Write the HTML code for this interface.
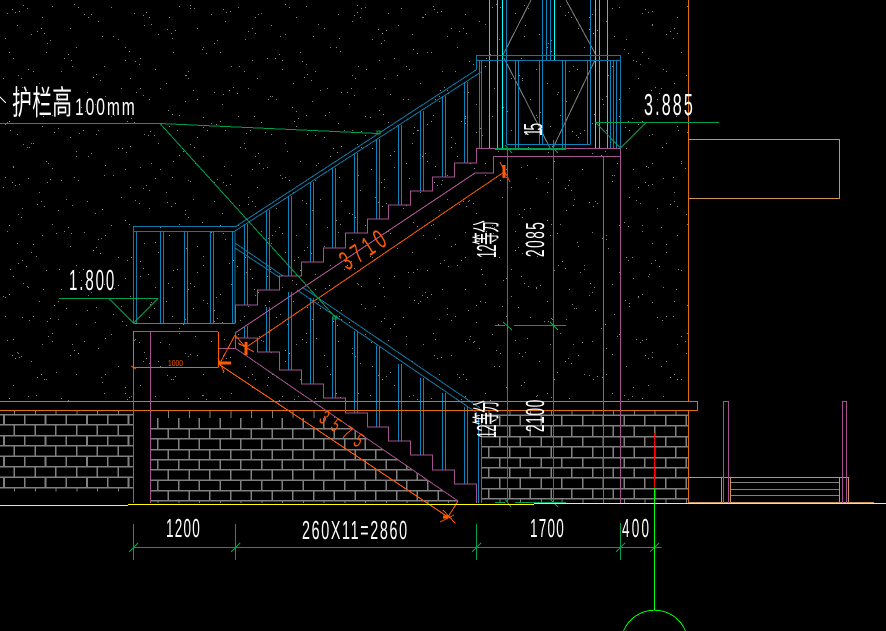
<!DOCTYPE html>
<html>
<head>
<meta charset="utf-8">
<style>
html,body{margin:0;padding:0;background:#000;width:886px;height:631px;overflow:hidden}
svg{display:block}
text{font-family:"Liberation Sans","Noto Sans CJK SC",sans-serif;fill:#fff}
.o{fill:#ff5a00}
</style>
</head>
<body>
<svg width="886" height="631" viewBox="0 0 886 631" xmlns="http://www.w3.org/2000/svg">
<defs>
<pattern id="dotsA" patternUnits="userSpaceOnUse" width="127" height="109">
<path shape-rendering="crispEdges" fill="none" stroke="#808080" stroke-width="1" d="M7 13.5h1M52 6.5h1M98 21.5h1M31 34.5h1M76 47.5h1M118 39.5h1M13 58.5h1M61 71.5h1M104 66.5h1M39 83.5h1M87 92.5h1M22 99.5h1M121 88.5h1M70 28.5h1M3 78.5h1M46 52.5h1M111 7.5h1M84 14.5h1M28 69.5h1M95 104.5h1M58 101.5h1M17 25.5h1M66 90.5h1M125 60.5h1M42 17.5h1"/>
</pattern>
<pattern id="dotsB" patternUnits="userSpaceOnUse" width="211" height="173">
<path shape-rendering="crispEdges" fill="none" stroke="#8a8a8a" stroke-width="1" d="M12 9.5h1M15 12.5h1M19 11.5h1M74 4.5h1M78 7.5h1M143 15.5h1M146 12.5h1M149 17.5h1M190 8.5h1M37 31.5h1M41 28.5h1M44 33.5h1M102 36.5h1M167 29.5h1M171 33.5h1M175 30.5h1M9 52.5h1M64 58.5h1M68 54.5h1M71 60.5h1M125 47.5h1M129 51.5h1M202 49.5h1M206 53.5h1M33 71.5h1M93 77.5h1M96 74.5h1M100 80.5h1M155 69.5h1M186 75.5h1M18 90.5h1M22 87.5h1M26 93.5h1M59 96.5h1M136 92.5h1M140 88.5h1M143 95.5h1M197 99.5h1M81 107.5h1M85 111.5h1M43 116.5h1M114 115.5h1M118 112.5h1M168 110.5h1M172 114.5h1M5 124.5h1M9 121.5h1M54 132.5h1M58 128.5h1M96 134.5h1M150 131.5h1M154 135.5h1M203 127.5h1M207 130.5h1M29 147.5h1M33 143.5h1M76 151.5h1M122 148.5h1M126 152.5h1M130 146.5h1M179 155.5h1M183 151.5h1M13 166.5h1M48 163.5h1M52 168.5h1M105 165.5h1M160 169.5h1M195 163.5h1"/>
</pattern>
<pattern id="dotsC" patternUnits="userSpaceOnUse" width="167" height="139">
<path shape-rendering="crispEdges" fill="none" stroke="#808080" stroke-width="1" d="M23 5.5h1M27 8.5h1M88 17.5h1M91 14.5h1M151 24.5h1M5 38.5h1M47 43.5h1M50 40.5h1M113 36.5h1M72 66.5h1M135 61.5h1M139 64.5h1M18 75.5h1M21 78.5h1M160 88.5h1M56 94.5h1M101 99.5h1M105 96.5h1M36 117.5h1M127 121.5h1M131 118.5h1M10 130.5h1M79 133.5h1M83 130.5h1M148 135.5h1"/>
</pattern>
<clipPath id="cm"><path d="M150.5 410V503H458.5V501L326 410Z"/></clipPath>
<clipPath id="cr"><path d="M481.5 410V503H688V410Z"/></clipPath>
</defs>

<rect width="886" height="631" fill="#000"/>
<path d="M0 0H688V401H0Z" fill="url(#dotsA)"/>
<path d="M0 0H688V401H0Z" fill="url(#dotsB)"/>
<path d="M0 0H688V401H0Z" fill="url(#dotsC)"/>

<g fill="none" shape-rendering="crispEdges">
<!-- bricks -->
<g stroke="#808080">
<path stroke-width="1.5" d="M0 414.5H133M0 424.5H133M0 435.5H133M0 445.5H133M0 456H133M0 466.5H133M0 477H133M0 487.5H133"/>
<g stroke-width="10.4" stroke-dasharray="1.6 19.15">
<path d="M3.2 419.5H133M13.5 430H133M3.2 440.5H133M13.5 450.5H133M3.2 461H133M13.5 471.5H133M3.2 482H133"/>
</g>
<path stroke-width="4" stroke-dasharray="1 19.75" d="M14 412.5H133M14 489.5H133"/>
<g clip-path="url(#cm)">
<path stroke-width="1.5" d="M150 428.5H460M150 438.5H460M150 449.5H460M150 459.5H460M150 469.5H460M150 480H460M150 490.5H460M150 500.5H460"/>
<path stroke-width="7.5" stroke-dasharray="1 19.75" d="M168 414H340"/>
<g stroke-width="10.4" stroke-dasharray="1.6 19.15">
<path d="M157 423.3H340M167.5 433.5H380M157 444H400M167.5 454.3H420M157 464.5H440M167.5 474.8H460M157 485.1H460M167.5 495.5H460"/>
</g>
<path stroke-width="2.5" stroke-dasharray="1 19.75" d="M157.5 502H460"/>
</g>
<g clip-path="url(#cr)">
<path stroke-width="1.5" d="M481 415H690M481 425.5H690M481 436.5H690M481 446.5H690M481 457.5H690M481 467.5H690M481 477.5H690M481 488.5H690M481 498.5H690"/>
<path stroke-width="4.5" stroke-dasharray="1 19.75" d="M488.5 412.8H690"/>
<g stroke-width="10.4" stroke-dasharray="1.6 19.15">
<path d="M478 420.3H690M488 431H690M478 441.5H690M488 452H690M478 462.5H690M488 472.7H690M478 483H690M488 493.5H690"/>
</g>
<path stroke-width="4.5" stroke-dasharray="1 19.75" d="M478.5 501H690"/>
</g>
</g>

<!-- tower upper lines -->
<g stroke="#c8935f"><path d="M489.5 0V148M497.5 0V148M599.5 0V148M607.5 0V148"/></g>
<g stroke="#808080"><path d="M531 0L503 55M566 0L596 55M504 58L550 148M596 58L553 148"/></g>
<g stroke="#00ffff"><path d="M502.5 0V148M595.5 0V148M554.5 0V60"/></g>
<g stroke="#0a84bf"><path d="M506.5 0V144M542.5 0V144M546.5 0V60M550.5 0V60M590.5 0V144"/></g>

<!-- right landing rail -->
<g stroke="#1078a4">
<path d="M476.5 70V55.5H620.5V148M476.5 60.5H620.5"/>
</g>
<g stroke="#0a84bf">
<path d="M479.5 60V148M481.5 60V148M515.5 60V148M518.5 60V148M539.5 60V144M542.5 60V144M562.5 60V148M565.5 60V148M587.5 60V144M590.5 60V144M610.5 60V148M613.5 60V148M616.5 60V148M506.5 144.5H590.5"/>
</g>

<!-- upper handrail -->
<g stroke="#1078a4">
<path d="M235 227L476 70M235 231L481 72M235 226.5H133.5V323M133.5 231.5H235V323M136.5 231V323"/>
</g>
<g stroke="#0a84bf">
<path d="M160.5 231V323M163.5 231V323M184.5 231V323M187.5 231V323M210.5 231V323M213.5 231V323M232.5 231V323"/>
<path d="M244.5 224V305M247.5 224V305M266.5 210V290M269.5 210V290M288.5 196V276M291.5 196V276M310.5 182V262M313.5 182V262M332.5 168V248M335.5 168V248M354.5 153V233M357.5 153V233M376.5 139V219M379.5 139V219M398.5 125V205M401.5 125V205M420.5 111V191M423.5 111V191M442.5 96V177M445.5 96V177M464.5 82V163M467.5 82V163"/>
<!-- lower balusters -->
<path d="M244.5 326V338M247.5 326V338M266.5 307V352M269.5 307V352M288.5 292V370M291.5 292V370M310.5 298V384M313.5 298V384M332.5 317V398M335.5 317V398M354.5 331V413M357.5 331V413M376.5 346V427M379.5 346V427M398.5 364V441M401.5 364V441M420.5 378V455M423.5 378V455M442.5 393V470M445.5 393V470M464.5 407V484M467.5 407V484M478.5 417V503M481.5 417V503"/>
</g>
<g stroke="#1078a4">
<path d="M235 243L283 276M302 287L480 408M235 248L279 277M297 290L477 413"/>
</g>

<!-- orange lines -->
<g stroke="#e06c10">
<path d="M0 401.5H697.5V410.5H0M688.5 0V401M688.5 410V503"/>
</g>
<g stroke="#cc9058">
<path d="M688.5 139.5H839.5V198.5H688.5M688.5 477.5H848.5V503M721.5 477V503M730.5 477V503M839.5 477V503M688 502.5H874"/>
</g>
<g stroke="#808080"><path d="M731 482.5H839M731 489.5H839M731 495.5H839"/></g>

<!-- magenta -->
<g stroke="#a5508f">
<path d="M235.5 323V305H257.5V290H279.5V276H301.5V262H323.5V248H345.5V233H367.5V219H388.5V205H410.5V191H432.5V177H454.5V163H476.5V148.5H620.5V503"/>
<path d="M235.5 333V338H257.5V352H279.5V370H301.5V384H323.5V398H345.5V413H367.5V427H388.5V441H410.5V455H432.5V470H454.5V484H476.5V503"/>
<path d="M235 333L475 173H493.5V156.5H620.5M603.5 156.5V503"/>
<path d="M235 348L458 501M235.5 323.5H133.5M133.5 367V503M150.5 331.5V503M133.5 331.5H218M218.5 348.5H235.5V333"/>
<path d="M723.5 503V401.5H728.5V403M728.5 403V503M842.5 503V401.5H846.5V503"/>
</g>

<!-- dimension orange -->
<g stroke="#ff5a00">
<path d="M133.5 331V367M133.5 367.5H218.5M218.5 332V367M245 348L504 172M220 365L448 517M218 367L235 335M235 335L246 348M458 501L448 517"/>
<path d="M500 162L510 182M443 510L455 523M440 522L454 515M238 343L254 352M218 358L224 372M131 366L136 369"/>
</g>
<g stroke="#ff5a00" stroke-width="3">
<path d="M246 342V355M504 165V178M219 363H231M448 517H443"/>
</g>

<!-- green lines -->
<g stroke="#00a050">
<path d="M0 123.5H160L378 133.5M160 123.5L336 318M59 298.5H158M109 298.5L133.5 323L158 298.5"/>
<path d="M595.5 122.5H719M595.5 122.5L620.5 148L646 122.5"/>
<path d="M495 148.5H566M495 149.5H566M507.5 149V503M553.5 140V503"/>
<path d="M495 325.5H505M514 325.5H566M495 502.5H505M515 502.5H566"/>
<path d="M505 145L512 153M553 148L558 153M503 322L512 330M550 322L558 330M505 499L511 507M550 499L558 507"/>
<path d="M133.5 547.5H661.5M133.5 524V560M235.5 524V560M476.5 524V560M620.5 523V560"/>
<path d="M129 552L138 543M231 552L240 543M472 552L481 543M616 552L625 543M650 552L659 543"/>
<path d="M377 131h3v3h-3zM333 316h4v3h-4z"/>
</g>
<path stroke="#ff0000" d="M654.5 433V488"/>
<path stroke="#00ff00" d="M654.5 488V610"/>
<path stroke="#00ff00" d="M623.5 631A33.5 33.5 0 0 1 685.5 631"/>

<!-- ground -->
<path stroke="#ffff00" d="M0 505.5H128M128 504.5H534M534 503.5H886"/>
<path stroke="#fff" d="M0 97L6 103"/>
</g>

<!-- text -->
<text transform="translate(12,114) scale(.6,1)" font-size="33" textLength="100">护栏高</text>
<text transform="translate(75,115) scale(.65,1)" font-size="24" textLength="92">100mm</text>
<text transform="translate(69,290) scale(.52,1)" font-size="29" textLength="87">1.800</text>
<text transform="translate(644,115) scale(.52,1)" font-size="31" textLength="94">3.885</text>
<text transform="translate(166,537) scale(.52,1)" font-size="26" textLength="65">1200</text>
<text transform="translate(302,539) scale(.55,1)" font-size="26" textLength="191">260X11=2860</text>
<text transform="translate(530,537) scale(.52,1)" font-size="26" textLength="65">1700</text>
<text transform="translate(622,537) scale(.52,1)" font-size="26" textLength="52">400</text>
<text transform="translate(542,136) rotate(-90) scale(.52,1)" font-size="26" textLength="25">15</text>
<text transform="translate(544,257) rotate(-90) scale(.52,1)" font-size="26" textLength="67">2085</text>
<text transform="translate(496,258) rotate(-90) scale(.45,1)" font-size="28" textLength="84">12等分</text>
<text transform="translate(496,438) rotate(-90) scale(.45,1)" font-size="28" textLength="84">12等分</text>
<text transform="translate(544,432) rotate(-90) scale(.52,1)" font-size="26" textLength="62">2100</text>
<text class="o" transform="translate(347,271) rotate(-33) scale(.6,1)" font-size="27" textLength="82">3710</text>
<text class="o" transform="translate(318,421) rotate(34) scale(.6,1)" font-size="20" textLength="80">3575</text>
<text class="o" x="168" y="366" font-size="8" textLength="15" lengthAdjust="spacingAndGlyphs">1000</text>
</svg>
</body>
</html>
